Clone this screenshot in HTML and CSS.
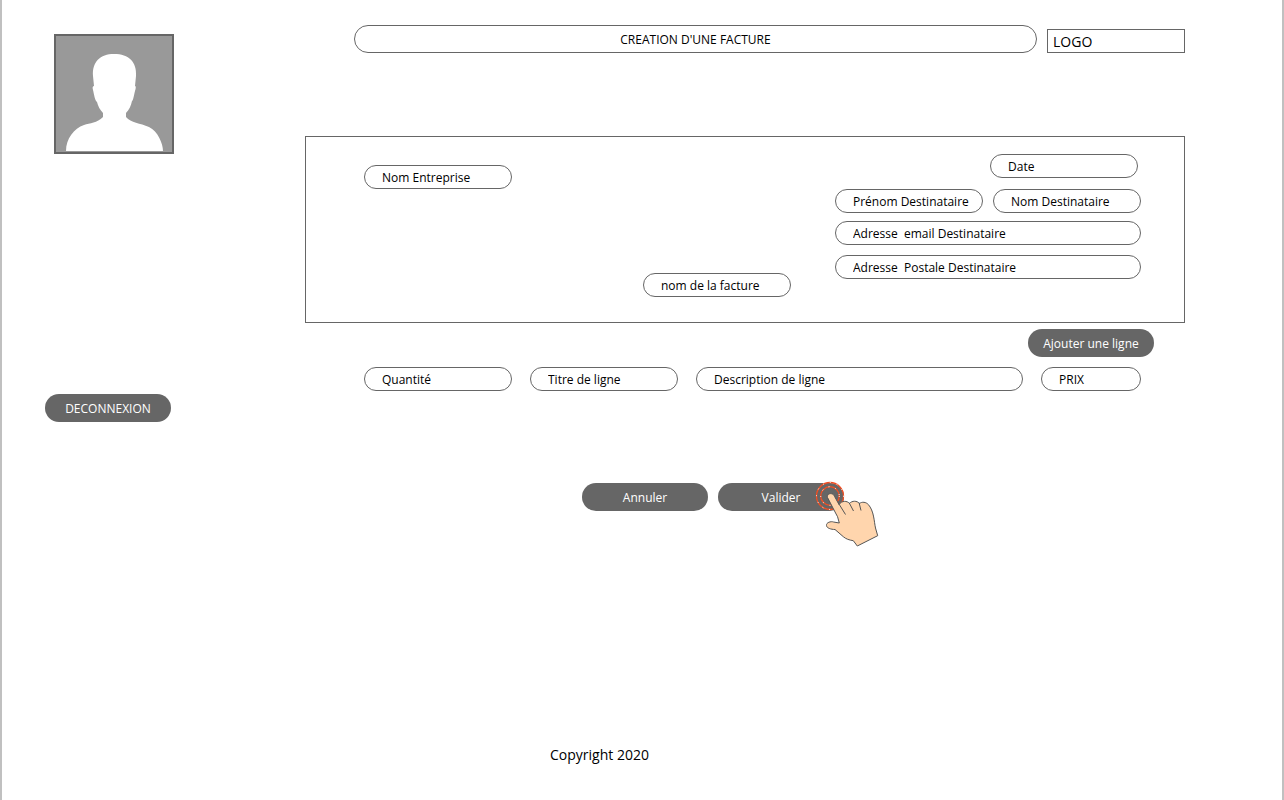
FILE: index.html
```html
<!DOCTYPE html>
<html lang="fr">
<head>
<meta charset="utf-8">
<title>Création d'une facture</title>
<link rel="stylesheet" href="styles.css">
</head>
<body>
<div class="page">
  <aside class="sidebar">
    <svg class="avatar" viewBox="0 0 116 116" role="img" aria-label="Photo de profil">
      <path fill="#fff" d="M10 115C10 103 18 92 28 89C34 87 41 87 47 81V77C44 74 42 70 41 66C39 65 38 58 37 54C36 51 37 50 38 50L37 40C36 26 44 18 58 18C73 18 81 26 80 40L79 50C80 50 80 52 79 55C78 59 77 65 76 65C75 70 73 74 70 77V81C75 87 84 87 93 91C102 95 107 108 107 115Z"/>
    </svg>
    <button class="button" type="button">DECONNEXION</button>
  </aside>

  <main class="content">
    <header class="header">
      <h1 class="title">CREATION D'UNE FACTURE</h1>
      <div class="logo">LOGO</div>
    </header>

    <form class="invoice">
      <section class="panel">
        <input class="field company" type="text" placeholder="Nom Entreprise" aria-label="Nom Entreprise">
        <input class="field invoice-name" type="text" placeholder="nom de la facture" aria-label="nom de la facture">
        <div class="recipient">
          <input class="field date" type="text" placeholder="Date" aria-label="Date">
          <div class="names">
            <input class="field" type="text" placeholder="Prénom Destinataire" aria-label="Prénom Destinataire">
            <input class="field" type="text" placeholder="Nom Destinataire" aria-label="Nom Destinataire">
          </div>
          <input class="field wide" type="text" placeholder="Adresse  email Destinataire" aria-label="Adresse email Destinataire">
          <input class="field wide postal" type="text" placeholder="Adresse  Postale Destinataire" aria-label="Adresse Postale Destinataire">
        </div>
      </section>

      <button class="button add-line" type="button">Ajouter une ligne</button>

      <div class="line">
        <input class="field" type="text" placeholder="Quantité" aria-label="Quantité">
        <input class="field" type="text" placeholder="Titre de ligne" aria-label="Titre de ligne">
        <input class="field description" type="text" placeholder="Description de ligne" aria-label="Description de ligne">
        <input class="field price" type="text" placeholder="PRIX" aria-label="PRIX">
      </div>

      <div class="actions">
        <button class="button" type="button">Annuler</button>
        <div class="confirm">
          <button class="button" type="button">Valider</button>
          <svg class="pointer" viewBox="0 0 66 68" aria-hidden="true">
            <g fill="none" stroke="#f04e23" stroke-width="1.3">
              <circle cx="16" cy="16" r="13.5"/>
              <circle cx="16" cy="16" r="9.3"/>
            </g>
            <g fill="none" stroke="#fff" stroke-dasharray="1 6">
              <circle cx="16" cy="16" r="13.5"/>
              <circle cx="16" cy="16" r="9.3"/>
            </g>
            <path fill="#ffd5ad" stroke="#555" stroke-linejoin="round" d="M13.5 17.5C12.5 13 19 12 20.7 16.7L25 24.5C28 20.5 33 20.5 35.5 23.5C38 20.5 43 20.5 45.5 23.5C48 21.5 52 22 54.3 24.5C60 31 60 41 61.5 48L63.7 55.7L43.3 66L39.3 60.7C35 60 32 59 29.3 56.7L21 49.5C17 49.5 12.5 48 12.5 45.5C12 42.5 17 41 19.5 42L25.3 43Q24.5 37 20 30Z"/>
            <path fill="none" stroke="#555" d="M25 24L31.5 34.5M35 22.5L39.5 31M45 22.5L47 30.5"/>
          </svg>
        </div>
      </div>
    </form>

    <footer class="footer">Copyright 2020</footer>
  </main>
</div>
</body>
</html>
```
FILE: styles.css
```css
* {
  box-sizing: border-box;
}

body {
  margin: 0;
  background: #fff;
  color: #000;
  font-family: "Segoe UI", "Open Sans", "Noto Sans", sans-serif;
  font-size: 12px;
  line-height: 16px;
}

.page {
  display: flex;
  min-height: 100vh;
  padding-right: 97px;
  border: solid #c0c0c0;
  border-width: 0 2px;
}

.sidebar {
  display: flex;
  flex: none;
  flex-direction: column;
  align-items: flex-start;
  gap: 240px;
  width: 303px;
  padding: 34px 0 0 43px;
}

.avatar {
  width: 120px;
  height: 120px;
  margin-left: 9px;
  border: 2px solid #666;
  background: #999;
}

.content {
  display: flex;
  flex: 1;
  flex-direction: column;
  min-width: 0;
  padding-top: 25px;
}

.button {
  width: 126px;
  height: 28px;
  padding: 2px 0 0;
  border: 0;
  border-radius: 14px;
  background: #666;
  color: #fff;
  font: inherit;
  cursor: pointer;
}

.field {
  width: 148px;
  height: 24px;
  padding: 0 8px 0 17px;
  border: 1px solid #666;
  border-radius: 12px;
  background: #fff;
  color: #000;
  font: inherit;
}

.field::placeholder {
  color: #000;
  opacity: 1;
}

.header {
  display: flex;
  align-items: flex-end;
  gap: 10px;
  padding-left: 49px;
}

.title {
  flex: 1;
  margin: 0;
  padding: 6px 0 4px;
  border: 1px solid #666;
  border-radius: 14px;
  font-size: 12px;
  font-weight: 400;
  text-align: center;
}

.logo {
  width: 138px;
  padding: 2px 5px 0;
  border: 1px solid #666;
  font-size: 14px;
  line-height: 20px;
}

.invoice {
  margin-top: 83px;
}

.panel {
  display: flex;
  min-height: 187px;
  padding: 17px 43px 25px 58px;
  border: 1px solid #666;
}

.company {
  margin-top: 11px;
}

.invoice-name {
  align-self: flex-end;
  margin-left: auto;
}

.recipient {
  display: flex;
  flex-direction: column;
  width: 306px;
  margin-left: 44px;
}

.date {
  align-self: flex-end;
  margin-right: 3px;
}

.names {
  display: flex;
  gap: 10px;
  margin: 11px 0 8px;
}

.wide {
  width: 100%;
}

.postal {
  margin-top: 10px;
}

.add-line {
  display: block;
  margin: 6px 31px 10px auto;
}

.line {
  display: flex;
  gap: 18px;
  padding: 0 44px 0 59px;
}

.description {
  flex: 1;
  min-width: 0;
}

.price {
  width: 100px;
}

.actions {
  display: flex;
  gap: 10px;
  margin-top: 92px;
  padding-left: 277px;
}

.confirm {
  position: relative;
}

.pointer {
  position: absolute;
  top: -3px;
  left: 96px;
  width: 66px;
  height: 68px;
  pointer-events: none;
}

.footer {
  margin-top: auto;
  padding: 0 0 35px 245px;
  font-size: 14px;
  line-height: 20px;
}
```
